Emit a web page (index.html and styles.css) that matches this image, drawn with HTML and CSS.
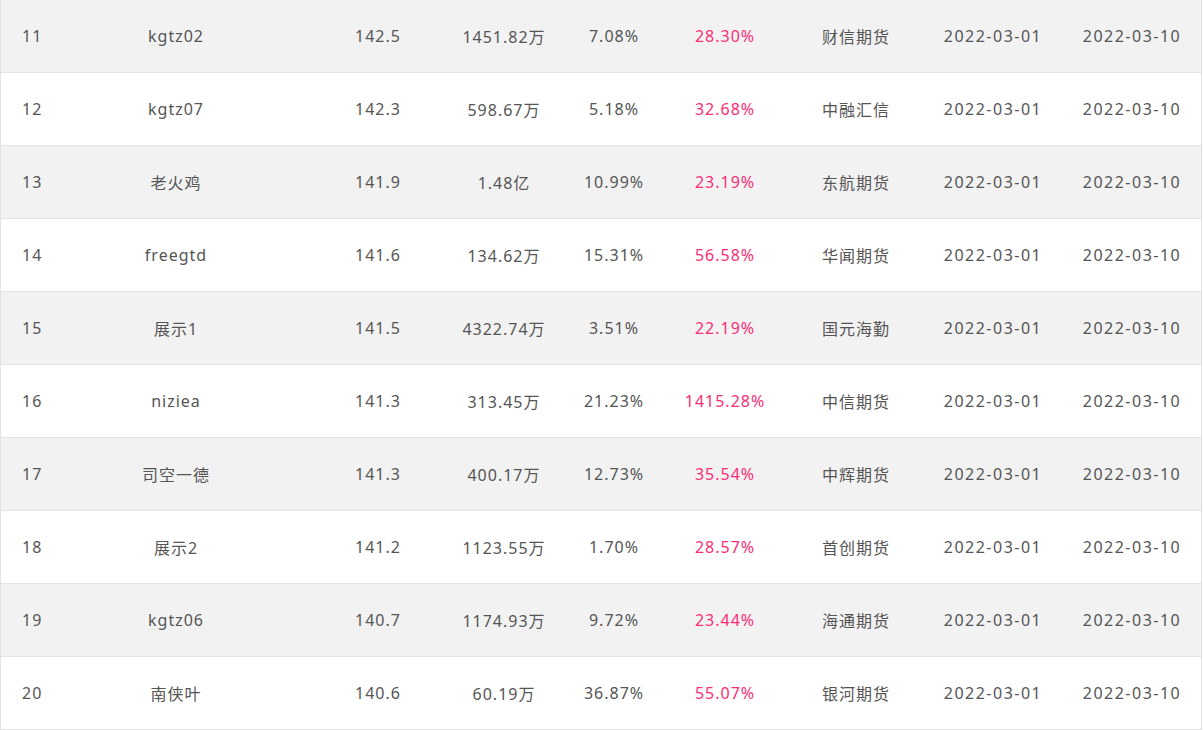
FILE: index.html
```html
<!DOCTYPE html>
<html lang="zh-CN">
<head>
<meta charset="utf-8">
<title>排行榜</title>
<link rel="stylesheet" href="styles.css">
</head>
<body>
<div class="table">
  <div class="row odd"><span class="c1">11</span><span class="c2">kgtz02</span><span class="c3">142.5</span><span class="c4">1451.82万</span><span class="c5">7.08%</span><span class="c6 red">28.30%</span><span class="c7">财信期货</span><span class="c8">2022-03-01</span><span class="c9">2022-03-10</span></div>
  <div class="row"><span class="c1">12</span><span class="c2">kgtz07</span><span class="c3">142.3</span><span class="c4">598.67万</span><span class="c5">5.18%</span><span class="c6 red">32.68%</span><span class="c7">中融汇信</span><span class="c8">2022-03-01</span><span class="c9">2022-03-10</span></div>
  <div class="row odd"><span class="c1">13</span><span class="c2">老火鸡</span><span class="c3">141.9</span><span class="c4">1.48亿</span><span class="c5">10.99%</span><span class="c6 red">23.19%</span><span class="c7">东航期货</span><span class="c8">2022-03-01</span><span class="c9">2022-03-10</span></div>
  <div class="row"><span class="c1">14</span><span class="c2">freegtd</span><span class="c3">141.6</span><span class="c4">134.62万</span><span class="c5">15.31%</span><span class="c6 red">56.58%</span><span class="c7">华闻期货</span><span class="c8">2022-03-01</span><span class="c9">2022-03-10</span></div>
  <div class="row odd"><span class="c1">15</span><span class="c2">展示1</span><span class="c3">141.5</span><span class="c4">4322.74万</span><span class="c5">3.51%</span><span class="c6 red">22.19%</span><span class="c7">国元海勤</span><span class="c8">2022-03-01</span><span class="c9">2022-03-10</span></div>
  <div class="row"><span class="c1">16</span><span class="c2">niziea</span><span class="c3">141.3</span><span class="c4">313.45万</span><span class="c5">21.23%</span><span class="c6 red">1415.28%</span><span class="c7">中信期货</span><span class="c8">2022-03-01</span><span class="c9">2022-03-10</span></div>
  <div class="row odd"><span class="c1">17</span><span class="c2">司空一德</span><span class="c3">141.3</span><span class="c4">400.17万</span><span class="c5">12.73%</span><span class="c6 red">35.54%</span><span class="c7">中辉期货</span><span class="c8">2022-03-01</span><span class="c9">2022-03-10</span></div>
  <div class="row"><span class="c1">18</span><span class="c2">展示2</span><span class="c3">141.2</span><span class="c4">1123.55万</span><span class="c5">1.70%</span><span class="c6 red">28.57%</span><span class="c7">首创期货</span><span class="c8">2022-03-01</span><span class="c9">2022-03-10</span></div>
  <div class="row odd"><span class="c1">19</span><span class="c2">kgtz06</span><span class="c3">140.7</span><span class="c4">1174.93万</span><span class="c5">9.72%</span><span class="c6 red">23.44%</span><span class="c7">海通期货</span><span class="c8">2022-03-01</span><span class="c9">2022-03-10</span></div>
  <div class="row"><span class="c1">20</span><span class="c2">南侠叶</span><span class="c3">140.6</span><span class="c4">60.19万</span><span class="c5">36.87%</span><span class="c6 red">55.07%</span><span class="c7">银河期货</span><span class="c8">2022-03-01</span><span class="c9">2022-03-10</span></div>
</div>
</body>
</html>
```
FILE: styles.css
```css
html, body {
  margin: 0;
  padding: 0;
  background: #fff;
}
body {
  font-family: "Noto Sans", "Noto Sans CJK SC", sans-serif;
  font-size: 16px;
  color: #555;
  letter-spacing: 1px;
}
.table {
  width: 1202px;
  border-left: 1px solid #e2e2e2;
  border-right: 1px solid #e2e2e2;
  box-sizing: border-box;
}
.row {
  display: grid;
  grid-template-columns: 62px 214px 164px 118px 110px 122px 134px 138px 138px;
  height: 72px;
  align-items: center;
  border-bottom: 1px solid #e2e2e2;
  background: #fff;
}
.row.odd {
  background: #f2f2f2;
}
.row span {
  text-align: center;
  white-space: nowrap;
}
.c1 { text-align: left !important; padding-left: 21px; }
.c2 { padding-left: 12px; }
.c3 { padding-left: 38px; }
.c4 { padding-left: 8px; }
.c6 { padding-right: 10px; }
.c7 { padding-right: 4px; }
.c8, .c9 { letter-spacing: 1.5px; }
.c8 { padding-right: 2px; }
.red { color: #fc2d78; }
```
